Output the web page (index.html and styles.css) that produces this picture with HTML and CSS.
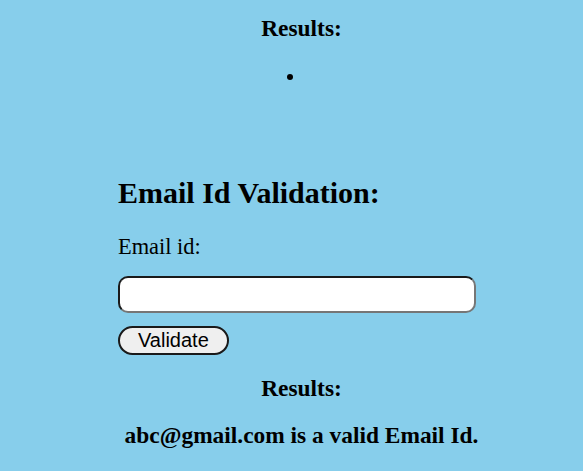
FILE: index.html
```html
<!DOCTYPE html>
<html>
<head>
<meta charset="utf-8">
<link rel="stylesheet" href="styles.css">
</head>
<body>
<div class="wrap">
  <h3 class="results-title first">Results:</h3>
  <div class="dot"></div>
  <h2 class="title">Email Id Validation:</h2>
  <p class="label">Email id:</p>
  <input class="email" type="text">
  <div class="btn-row"><button class="btn">Validate</button></div>
  <h3 class="results-title second">Results:</h3>
  <p class="result">abc@gmail.com is a valid Email Id.</p>
</div>
</body>
</html>
```
FILE: styles.css
```css
html, body {
  margin: 0;
  padding: 0;
  background: #87ceeb;
}
body {
  font-family: "Liberation Serif", "Times New Roman", serif;
  color: #000;
}
.wrap {
  margin-left: 118px;
  width: 367px;
  display: flex;
  flex-direction: column;
}
.results-title {
  margin: 0;
  font-size: 23.4px;
  line-height: 26px;
  font-weight: bold;
  text-align: center;
}
.first { margin-top: 15px; }
.second { margin-top: 20px; }
.dot {
  width: 6px;
  height: 6px;
  border-radius: 50%;
  background: #000;
  margin-top: 33px;
  margin-left: 169px;
}
.title {
  margin: 96px 0 0;
  font-size: 30px;
  line-height: 33px;
  font-weight: bold;
}
.label {
  margin: 26px 0 0;
  font-size: 22.4px;
  line-height: 24px;
}
.email {
  margin: 17px 0 0;
  width: 358px;
  height: 37px;
  box-sizing: border-box;
  border: 2px solid;
  border-color: #1a1a1a #767676 #767676 #1a1a1a;
  border-radius: 10px;
  background: #fff;
  padding: 0 6px;
  outline: none;
}
.btn-row {
  margin-top: 13px;
  display: flex;
}
.btn {
  font-family: "Liberation Sans", Arial, sans-serif;
  font-size: 20px;
  line-height: 23px;
  height: 29px;
  box-sizing: border-box;
  padding: 1px 18px;
  background: #efefef;
  color: #000;
  border: 2px solid #1a1a1a;
  border-radius: 15px;
}
.result {
  margin: 21px 0 0;
  font-size: 23.4px;
  line-height: 26px;
  font-weight: bold;
  text-align: center;
}
```
